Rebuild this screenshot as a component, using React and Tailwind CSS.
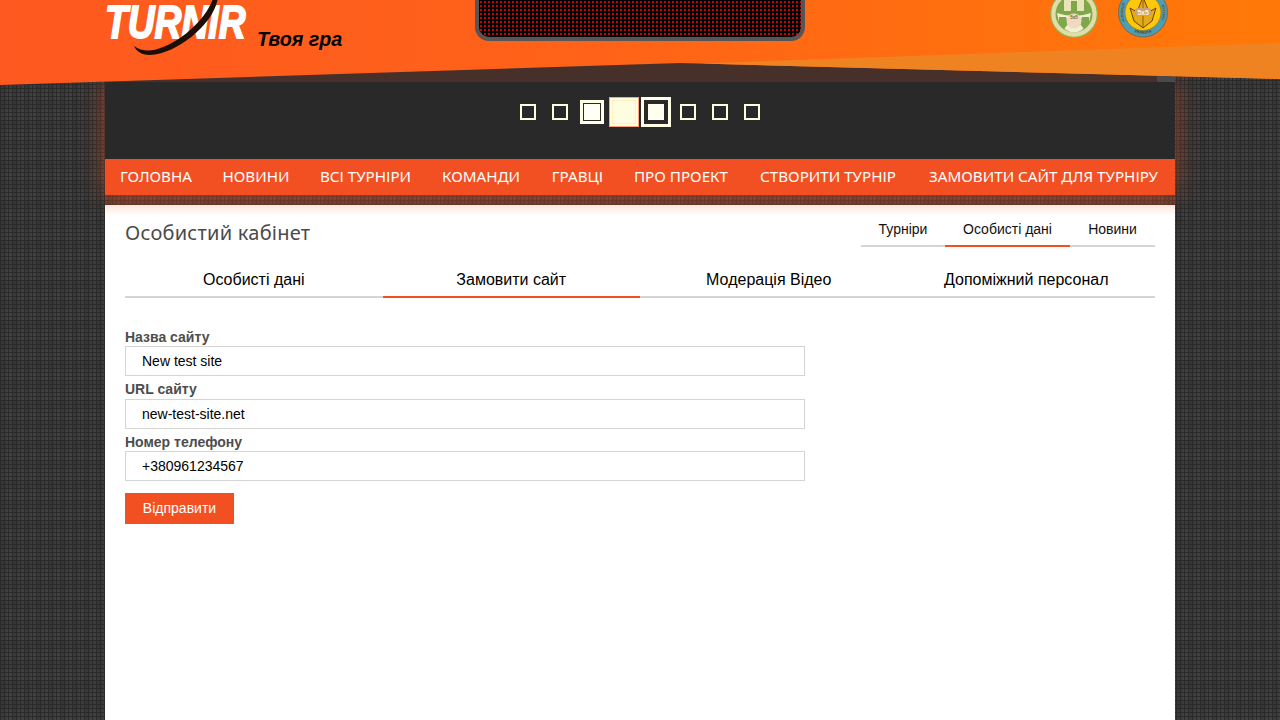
const sans = { fontFamily: '"Liberation Sans", Arial, sans-serif' };

const navItems = [
  ["ГОЛОВНА", "w-[102px]"],
  ["НОВИНИ", "w-[98px]"],
  ["ВСІ ТУРНІРИ", "w-[121px]"],
  ["КОМАНДИ", "w-[110px]"],
  ["ГРАВЦІ", "w-[83px]"],
  ["ПРО ПРОЕКТ", "w-[124px]"],
  ["СТВОРИТИ ТУРНІР", "w-[170px]"],
  ["ЗАМОВИТИ САЙТ ДЛЯ ТУРНІРУ", "w-[261px]"],
];

function Small() {
  return <span className="block h-4 w-4 border-2 border-[#fffde3]" />;
}

function Dots() {
  return (
    <div className="flex justify-center pt-[15px]">
      <div className="flex h-[30px] w-8 items-center justify-center"><Small /></div>
      <div className="flex h-[30px] w-8 items-center justify-center"><Small /></div>
      <div className="flex h-[30px] w-8 items-center justify-center">
        <span className="block h-6 w-6 border-[3px] border-[#fffde3] bg-[#fffff5] outline outline-1 -outline-offset-4 outline-[#292929]" />
      </div>
      <div className="flex h-[30px] w-8 items-center justify-center">
        <span className="flex h-[30px] w-[30px] items-center justify-center border border-[#ff9f80] bg-[#fffde0]">
          <span className="block h-6 w-6 border border-[#fff0c0]" />
        </span>
      </div>
      <div className="flex h-[30px] w-8 items-center justify-center">
        <span className="flex h-[30px] w-[30px] items-center justify-center border-[3px] border-[#fffde3] bg-[#292929]">
          <span className="block h-4 w-4 bg-[#fffff0]" />
        </span>
      </div>
      <div className="flex h-[30px] w-8 items-center justify-center"><Small /></div>
      <div className="flex h-[30px] w-8 items-center justify-center"><Small /></div>
      <div className="flex h-[30px] w-8 items-center justify-center"><Small /></div>
    </div>
  );
}

function Logo() {
  return (
    <div className="relative h-[60px] w-[152px]">
      <span
        className="absolute left-0 top-0 origin-top-left whitespace-nowrap text-[40px] font-bold italic leading-[39px] text-white [-webkit-text-stroke:1.6px_white] [transform:scaleX(0.93)_scaleY(1.14)]"
        style={sans}
      >
        TURNIR
      </span>
      <svg className="absolute left-0 top-0" width="152" height="60" viewBox="105 0 152 60">
        <path d="M217.5 0C212 26 176 54 150 55C142 55.3 136 51 134 46C140 50.5 148 51.5 156 49.5C180 43 205 20 212.5 0Z" fill="#1d0f08" />
      </svg>
    </div>
  );
}

function EmblemGreen() {
  return (
    <svg width="48" height="38" viewBox="0 0 48 38">
      <circle cx="24" cy="14" r="23.3" fill="#e0dda8" stroke="#8fb04f" strokeWidth="1.2" />
      <circle cx="24" cy="14" r="18.5" fill="#7fa84a" />
      <path d="M14 -6H34V11H14Z" fill="#e8e4b8" />
      <rect x="21" y="1" width="6" height="10" fill="#7fa84a" />
      <path d="M7 13Q24 19 41 13L39 22Q33 32 24 32.5Q15 32 9 22Z" fill="#f1efd2" />
      <path d="M9 17L16 17L18 24L14 29L9 24Z M39 17L32 17L30 24L34 29L39 24Z" fill="#7fa84a" />
      <circle cx="24" cy="21" r="7.5" fill="#f0d9bf" />
      <text x="24" y="19" textAnchor="middle" fontSize="4.5" fontWeight="700" fill="#5f6b35" style={sans}>5x5</text>
    </svg>
  );
}

function EmblemBlue() {
  return (
    <svg width="50" height="38" viewBox="0 0 50 38">
      <defs>
        <path id="ringBottom" d="M3.5 12.5A21.5 21.5 0 0 0 46.5 12.5" />
        <path id="ringLeft" d="M8.6 24A20 20 0 0 1 8.6 1" />
        <path id="ringRight" d="M41.4 1A20 20 0 0 1 41.4 24" />
      </defs>
      <circle cx="25" cy="12.5" r="24.5" fill="#4f9db5" stroke="#7a6a4a" strokeWidth="1" />
      <circle cx="25" cy="12.5" r="18" fill="#fdc80a" stroke="#8a6a20" strokeWidth="0.6" />
      <path d="M12 8L19 12L25 -3L31 12L38 8L34 21L25 28L16 21Z" fill="#e3ab16" stroke="#6b3f12" strokeWidth="1" />
      <path d="M25 -3L25 28M17 13L33 13" stroke="#6b3f12" strokeWidth="0.7" />
      <rect x="17" y="8" width="16" height="8" rx="3" fill="#c9a27a" />
      <text x="25" y="15" textAnchor="middle" fontSize="7" fontWeight="700" fill="#fff2dc" style={sans}>5x5</text>
      <text fontSize="4.4" fontWeight="700" fill="#5a4a2a" style={sans} textAnchor="middle">
        <textPath href="#ringBottom" startOffset="50%">УКРАЇНА</textPath>
      </text>
      <text fontSize="3.2" fontWeight="700" fill="#5a4a2a" style={sans} textAnchor="middle">
        <textPath href="#ringLeft" startOffset="50%">АСОЦІАЦІЯ</textPath>
      </text>
      <text fontSize="3.2" fontWeight="700" fill="#5a4a2a" style={sans} textAnchor="middle">
        <textPath href="#ringRight" startOffset="50%">ФУТЗАЛУ</textPath>
      </text>
    </svg>
  );
}

function Field({ label, value, labelClass }) {
  return (
    <label className="block">
      <span className={`block text-sm font-bold leading-4 text-[#4d4d4d] ${labelClass}`}>{label}</span>
      <input
        readOnly
        value={value}
        className="block h-[30px] w-[680px] border border-[#d5d5d5] bg-white px-4 text-sm text-black outline-none"
        style={sans}
      />
    </label>
  );
}

export default function App() {
  return (
    <div
      className="relative flex h-screen flex-col overflow-hidden bg-[#414141] bg-[linear-gradient(#2a2a2a_1px,transparent_1px),linear-gradient(90deg,#2a2a2a_1px,transparent_1px),linear-gradient(90deg,rgba(0,0,0,0.1)_50%,transparent_50%),linear-gradient(rgba(0,0,0,0.08)_50%,transparent_50%)] bg-[length:4px_4px,4px_4px,12px_12px,20px_20px]"
      style={sans}
    >
      {/* banner drawing */}
      <svg className="absolute left-0 top-0 z-10" width="1280" height="90" viewBox="0 0 1280 90">
        <defs>
          <linearGradient id="banner" x1="0" x2="1" y1="0" y2="0">
            <stop offset="0" stopColor="#fe5920" />
            <stop offset="0.45" stopColor="#ff6218" />
            <stop offset="1" stopColor="#ff7908" />
          </linearGradient>
        </defs>
        <path d="M0 0H1280V79L680 63L0 85Z" fill="url(#banner)" />
        <path d="M700 63.5L1280 43V79Z" fill="#ef8322" />
      </svg>

      {/* header row */}
      <header className="relative z-20 mx-auto flex h-[82px] w-[1070px] shrink-0 items-start">
        <div className="flex w-[370px] shrink-0 items-start">
          <Logo />
          <span className="mt-[25px] text-[19.7px] font-bold italic leading-[28px] text-black">Твоя гра</span>
        </div>
        <div className="h-[41px] w-[330px] shrink-0 rounded-b-[14px] border-x-4 border-b-4 border-[#565656] bg-black bg-[radial-gradient(circle,#d00000_0.8px,#000000_1.2px)] bg-[length:4px_4px]" />
        <div className="ml-[245px] flex gap-5">
          <EmblemGreen />
          <EmblemBlue />
        </div>
      </header>

      {/* brown strip above the dark panel */}
      <div className="absolute left-[105px] top-[60px] flex h-[22px] w-[1070px]">
        <div className="h-full w-[1052px] bg-[#47302a]" />
        <div className="h-full w-[18px] bg-[#4b4848]" />
      </div>

      <main className="mx-auto flex w-[1070px] flex-1 flex-col">
        <div className="shadow-[0_0_24px_-2px_rgba(242,80,34,0.6)]">
          <div className="h-[77px] bg-[#292929]">
            <Dots />
          </div>
          <nav className="flex h-9 items-start bg-[#f25022] text-white" style={{ fontFamily: '"Noto Sans", sans-serif' }}>
            {navItems.map(([text, w]) => (
              <a key={text} className={`${w} shrink-0 whitespace-nowrap text-center text-[15.2px] leading-[34px]`}>
                {text}
              </a>
            ))}
          </nav>
        </div>
        <div className="h-2.5 bg-[#f25022]/20" />

        <section className="flex-1 bg-white bg-[linear-gradient(#fde4da,#ffffff_10px)] px-5">
          <div className="flex h-[42px] items-start justify-between">
            <h1
              className="mt-[14px] text-[20px] font-normal leading-[28px] tracking-[0.25px] text-[#4a4a4a]"
              style={{ fontFamily: '"Noto Sans", sans-serif' }}
            >
              Особистий кабінет
            </h1>
            <div className="flex h-[42px] border-b-2 border-[#d5d5d5] text-sm text-[#111111]">
              <a className="flex h-[42px] w-[84px] items-center justify-center pt-[6px]">Турніри</a>
              <a className="flex h-[42px] w-[125px] items-center justify-center border-b-2 border-[#f25022] pt-2">Особисті дані</a>
              <a className="flex h-[42px] w-[85px] items-center justify-center pt-[6px]">Новини</a>
            </div>
          </div>

          <div className="mt-[17px] grid h-[34px] grid-cols-4 border-b-2 border-[#d5d5d5] text-center text-base text-black">
            <a className="h-[34px] leading-[32px]">Особисті дані</a>
            <a className="h-[34px] border-b-2 border-[#f25022] leading-[32px]">Замовити сайт</a>
            <a className="h-[34px] leading-[32px]">Модерація Відео</a>
            <a className="h-[34px] leading-[32px]">Допоміжний персонал</a>
          </div>

          <form className="mt-[31px]">
            <Field label="Назва сайту" value="New test site" labelClass="h-[17px]" />
            <Field label="URL сайту" value="new-test-site.net" labelClass="h-[23px] pt-[5px]" />
            <Field label="Номер телефону" value="+380961234567" labelClass="h-[22px] pt-[5px]" />
            <button type="button" className="mt-3 h-[31px] w-[109px] bg-[#f25022] pb-px text-sm text-white">
              Відправити
            </button>
          </form>
        </section>
      </main>
    </div>
  );
}
